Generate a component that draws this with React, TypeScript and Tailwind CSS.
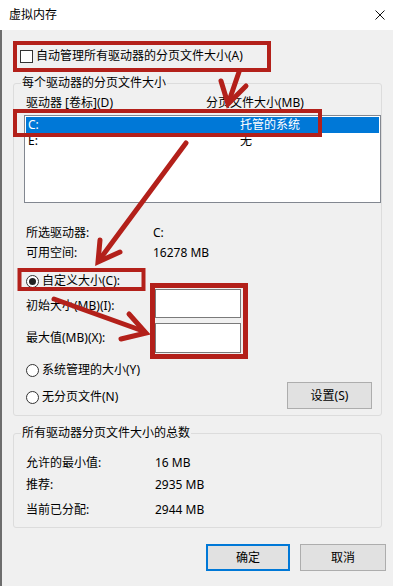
import React from "react";

function Radio({ checked }: { checked?: boolean }) {
  return (
    <span className="w-[13px] h-[13px] rounded-full border border-[#333333] bg-white flex items-center justify-center shrink-0">
      {checked && <span className="w-[7px] h-[7px] rounded-full bg-[#222222]" />}
    </span>
  );
}

export default function App() {
  const red = "#b3201a";
  return (
    <div className="relative w-[393px] h-[586px] overflow-hidden bg-[#f0f0f0] text-[12px] leading-[16px] text-black font-['Noto_Sans','Noto_Sans_CJK_SC',sans-serif]">
      {/* title bar */}
      <div className="h-[30px] bg-white flex items-center justify-between pl-[9px] pr-[8px]">
        <span>虚拟内存</span>
        <svg width="10" height="10" viewBox="0 0 10 10" className="mr-[0px]">
          <path d="M0.5 0.5 L9.5 9.5 M9.5 0.5 L0.5 9.5" stroke="#111" strokeWidth="1" />
        </svg>
      </div>

      {/* body */}
      <div className="border-l-2 border-[#6d6d6d] h-[556px] pl-[11px] pr-[11px]">
        {/* auto manage checkbox */}
        <div className="pt-[18px] pl-[7px] flex items-center gap-[3px] h-[34px]">
          <span className="w-[13px] h-[13px] border border-[#333333] bg-white shrink-0" />
          <span>自动管理所有驱动器的分页文件大小(A)</span>
        </div>

        {/* group 1 */}
        <fieldset className="mt-[11px] border border-[#dcdcdc] rounded-[3px] pb-[6px]">
          <legend className="ml-[7px] px-[1px] leading-[16px]">每个驱动器的分页文件大小</legend>
          <div className="mt-[4px] flex pl-[12px]">
            <span className="w-[180px]">驱动器 [卷标](D)</span>
            <span>分页文件大小(MB)</span>
          </div>
          <div className="mt-[4px] ml-[10px] h-[88px] border border-[#828790] bg-white p-[1px]">
            <div className="flex h-[16px] bg-[#0078d7] text-white pl-[2px]">
              <span className="w-[212px]">C:</span>
              <span>托管的系统</span>
            </div>
            <div className="flex h-[16px] pl-[2px]">
              <span className="w-[212px]">E:</span>
              <span>无</span>
            </div>
          </div>

          <div className="mt-[22px] flex pl-[12px]">
            <span className="w-[127px]">所选驱动器:</span>
            <span>C:</span>
          </div>
          <div className="mt-[4px] flex pl-[12px]">
            <span className="w-[127px]">可用空间:</span>
            <span>16278 MB</span>
          </div>

          <div className="mt-[12px] flex items-center gap-[3px] pl-[12px] h-[16px]">
            <Radio checked />
            <span>自定义大小(C):</span>
          </div>
          <div className="flex items-center pl-[12px] h-[29px]">
            <span className="w-[129px] pt-[4px]">初始大小(MB)(I):</span>
            <span className="w-[86px] h-[29px] border border-[#7a7a7a] bg-white" />
          </div>
          <div className="mt-[5px] flex items-center pl-[12px] h-[30px]">
            <span className="w-[129px]">最大值(MB)(X):</span>
            <span className="w-[86px] h-[30px] border border-[#7a7a7a] bg-white" />
          </div>

          <div className="mt-[9px] flex items-center gap-[3px] pl-[12px] h-[16px]">
            <Radio />
            <span>系统管理的大小(Y)</span>
          </div>
          <div className="mt-[4px] flex items-center justify-between pl-[12px] pr-[9px] h-[27px]">
            <div className="flex items-center gap-[3px] pt-[3px]">
              <Radio />
              <span>无分页文件(N)</span>
            </div>
            <button className="w-[85px] h-[27px] border border-[#adadad] bg-[#e1e1e1] flex items-center justify-center">
              设置(S)
            </button>
          </div>
        </fieldset>

        {/* group 2 */}
        <fieldset className="mt-[9px] border border-[#dcdcdc] rounded-[3px] pb-[9px]">
          <legend className="ml-[7px] px-[1px] leading-[16px]">所有驱动器分页文件大小的总数</legend>
          <div className="mt-[14px] flex pl-[12px]">
            <span className="w-[129px]">允许的最小值:</span>
            <span>16 MB</span>
          </div>
          <div className="mt-[6px] flex pl-[12px]">
            <span className="w-[129px]">推荐:</span>
            <span>2935 MB</span>
          </div>
          <div className="mt-[9px] flex pl-[12px]">
            <span className="w-[129px]">当前已分配:</span>
            <span>2944 MB</span>
          </div>
        </fieldset>

        {/* buttons */}
        <div className="mt-[16px] flex justify-end gap-[10px] -mr-[4px]">
          <button className="w-[84px] h-[27px] border-2 border-[#0078d7] bg-[#e1e1e1] flex items-center justify-center">
            确定
          </button>
          <button className="w-[86px] h-[27px] border border-[#adadad] bg-[#e1e1e1] flex items-center justify-center">
            取消
          </button>
        </div>
      </div>

      {/* annotations */}
      <svg className="absolute left-0 top-0 pointer-events-none" width="393" height="586" viewBox="0 0 393 586">
        <g fill="none" stroke={red} strokeLinejoin="miter">
          <rect x="15" y="43" width="254" height="27" strokeWidth="4" />
          <rect x="15" y="111" width="305" height="24" strokeWidth="4" />
          <rect x="19.5" y="270" width="124" height="19" strokeWidth="4" />
          <rect x="152.5" y="285.5" width="93" height="71" strokeWidth="5" />
        </g>
        <g fill="none" stroke={red} strokeWidth="5" strokeLinecap="round" strokeLinejoin="miter">
          <path d="M239 72 L229 101" />
          <path d="M221 81 L228 104 L246 86" />
          <path d="M186 143 L100 259" />
          <path d="M100 240 L98 262 L120 252" />
          <path d="M54 299 L143 331" />
          <path d="M129 314 L146 333 L121 339" />
        </g>
      </svg>
    </div>
  );
}
